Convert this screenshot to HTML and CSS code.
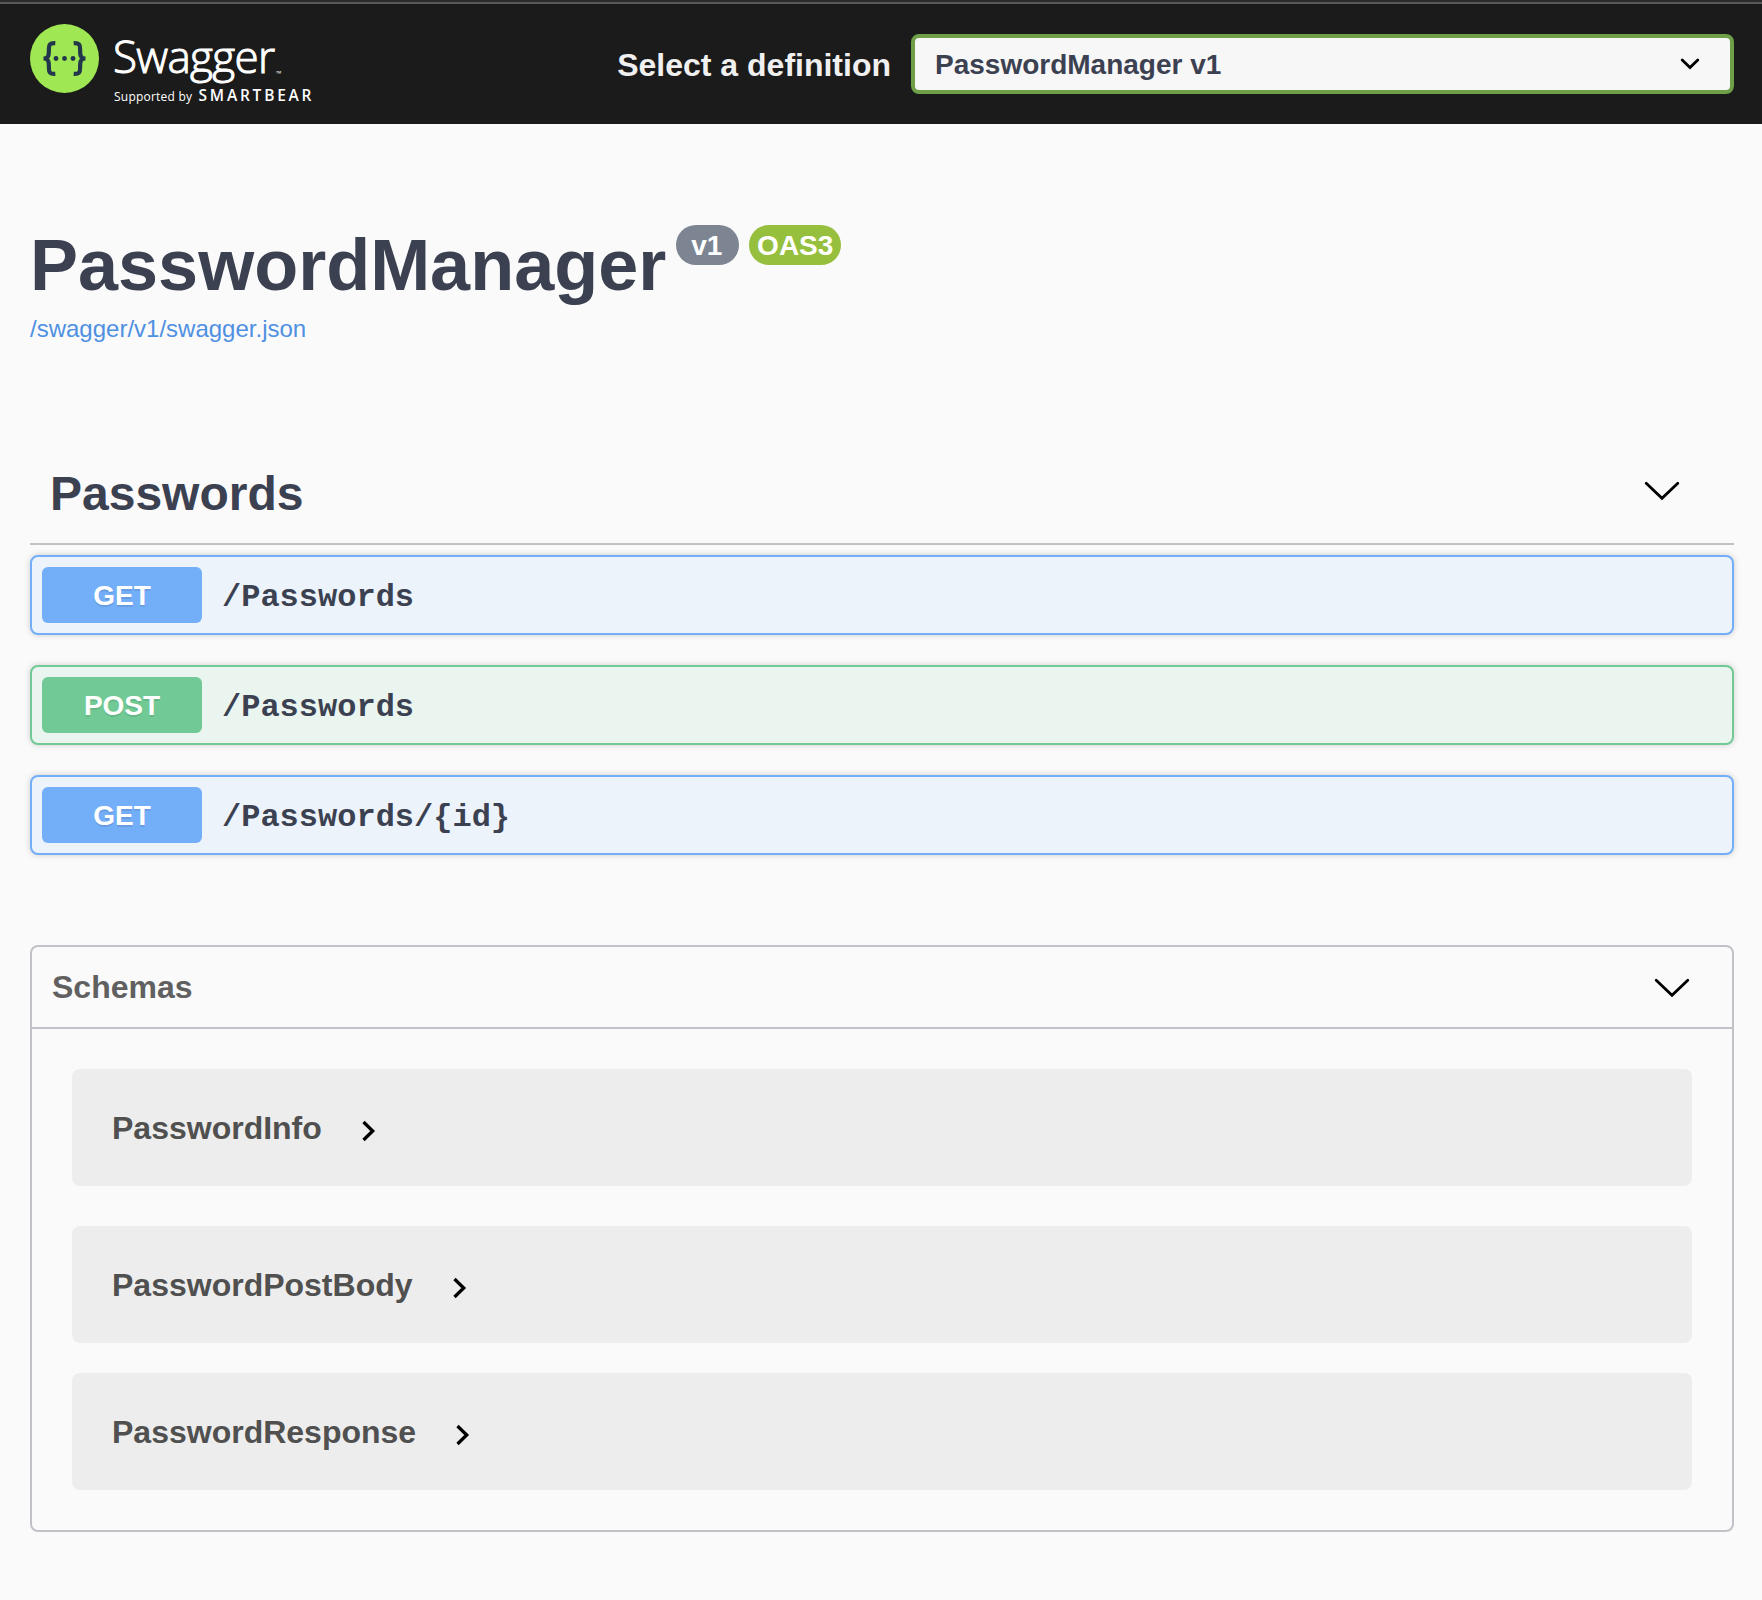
FILE: index.html
```html
<!DOCTYPE html>
<html lang="en">
<head>
<meta charset="utf-8">
<title>Swagger UI</title>
<link rel="stylesheet" href="styles.css">
</head>
<body>
<header class="topbar">
  <svg class="logo" width="300" height="100" viewBox="0 0 300 100" role="img" aria-label="Swagger">
    <circle cx="34.5" cy="34.5" r="34.5" fill="#9fe753"/>
    <g fill="none" stroke="#22374b" stroke-width="4.2">
      <path d="M25.3 19.2c-5.4-.3-6.400 1.500-6.400 5.600 0 5.800.2 9.700-5.400 9.700 5.600 0 5.400 3.900 5.400 9.700 0 4.100 1 5.900 6.400 5.600"/>
      <path d="M43.700 19.200c5.400-.3 6.400 1.500 6.400 5.600 0 5.800-.2 9.700 5.400 9.700-5.600 0-5.400 3.900-5.400 9.700 0 4.100-1 5.900-6.400 5.600"/>
    </g>
    <g fill="#22374b">
      <circle cx="26" cy="34.500" r="2.400"/><circle cx="34.500" cy="34.500" r="2.400"/><circle cx="43" cy="34.500" r="2.400"/>
    </g>
    <g fill="#fff">
      <text class="logo-name" x="83" y="48.500" textLength="162" lengthAdjust="spacing">Swagger</text>
      <text class="logo-tm" x="246" y="52">™</text>
      <text class="logo-by" x="84" y="77" textLength="78">Supported by</text>
      <text class="logo-brand" x="168.500" y="76.500" textLength="113">SMARTBEAR</text>
    </g>
  </svg>
  <label class="picker">
    <span class="picker-label">Select a definition</span>
    <span class="select"><span class="select-value">PasswordManager v1</span>
      <svg width="20" height="14" viewBox="0 0 20 14"><path d="M2.200 3 10 10.500 17.800 3" fill="none" stroke="#000" stroke-width="2.800" stroke-linecap="round"/></svg>
    </span>
  </label>
</header>
<main class="page">
  <section class="info">
    <div class="title-row">
      <h1 class="title">PasswordManager</h1>
      <span class="badge badge-version">v1</span>
      <span class="badge badge-oas">OAS3</span>
    </div>
    <a class="spec-link">/swagger/v1/swagger.json</a>
  </section>
  <section>
    <div class="tag">
      <h2 class="tag-name">Passwords</h2>
      <svg class="tag-arrow" width="36" height="20" viewBox="0 0 36 20"><path d="M2.200 2.200 18 17.300 33.800 2.200" fill="none" stroke="#000" stroke-width="2.800" stroke-linecap="round"/></svg>
    </div>
    <div class="operations">
      <div class="op op-get"><span class="method">GET</span><span class="path">/Passwords</span></div>
      <div class="op op-post"><span class="method">POST</span><span class="path">/Passwords</span></div>
      <div class="op op-get"><span class="method">GET</span><span class="path">/Passwords/{id}</span></div>
    </div>
  </section>
  <section class="schemas">
    <div class="schemas-head">
      <h3 class="schemas-title">Schemas</h3>
      <svg class="schemas-arrow" width="36" height="20" viewBox="0 0 36 20"><path d="M2.200 2.200 18 17.300 33.800 2.200" fill="none" stroke="#000" stroke-width="2.800" stroke-linecap="round"/></svg>
    </div>
    <div class="models">
      <div class="model model-first"><span class="model-name">PasswordInfo</span><svg class="model-arrow" width="14" height="22" viewBox="0 0 14 22"><path d="M1.500 2 10.700 11l-9.200 9" fill="none" stroke="#000" stroke-width="3.300"/></svg></div>
      <div class="model"><span class="model-name">PasswordPostBody</span><svg class="model-arrow" width="14" height="22" viewBox="0 0 14 22"><path d="M1.500 2 10.700 11l-9.200 9" fill="none" stroke="#000" stroke-width="3.300"/></svg></div>
      <div class="model"><span class="model-name">PasswordResponse</span><svg class="model-arrow" width="14" height="22" viewBox="0 0 14 22"><path d="M1.500 2 10.700 11l-9.200 9" fill="none" stroke="#000" stroke-width="3.300"/></svg></div>
    </div>
  </section>
</main>
</body>
</html>
```
FILE: styles.css
```css
* { box-sizing: border-box; }

body {
  margin: 0;
  min-height: 1600px;
  background: #fafafa;
  color: #3b4151;
  font-family: "Liberation Sans", Arial, sans-serif;
}

h1, h2, h3 { margin: 0; }
svg { display: block; flex: none; }

.topbar {
  display: flex;
  justify-content: space-between;
  align-items: flex-start;
  height: 124px;
  padding: 20px 28px 0 30px;
  border-top: 2px solid #2b2b2b;
  background: linear-gradient(#595959 2px, #1b1b1b 2px);
}

.logo { margin-top: 2px; overflow: visible; }
.logo-name { font: 300 44px "Open Sans", sans-serif; stroke: #fff; stroke-width: 1px; }
.logo-tm { font: 400 7px "Open Sans", sans-serif; }
.logo-by { font: 400 12px "Open Sans", sans-serif; }
.logo-brand { font: 600 15.5px "Open Sans", sans-serif; }

.picker {
  display: flex;
  align-items: center;
  gap: 20px;
  margin-top: 12px;
  font-weight: 700;
}
.picker-label { padding-top: 2px; color: #f0f0f0; font-size: 32px; }
.select {
  display: flex;
  align-items: center;
  justify-content: space-between;
  width: 823px;
  height: 60px;
  padding: 0 30px 0 20px;
  border: 4px solid #6fa049;
  border-radius: 8px;
  background: #f7f7f7;
  font-size: 28px;
}
.select-value { padding-top: 2px; }

.page { padding: 105px 28px 0 30px; }

.info { height: 215px; }
.title-row { display: flex; align-items: flex-start; height: 72px; }
.title { font-size: 72px; line-height: 72px; }
.badge {
  height: 40px;
  margin: -4px 0 0 10px;
  border-radius: 20px;
  color: #fff;
  font-size: 28px;
  font-weight: 700;
  line-height: 41px;
  text-align: center;
}
.badge-version { width: 63px; padding-right: 2px; background: #7d8492; }
.badge-oas { width: 92px; background: #96bf3d; }
.spec-link {
  display: block;
  margin-top: 14px;
  color: #4f90e2;
  font-size: 24px;
  line-height: 28px;
}

.tag {
  display: flex;
  align-items: center;
  justify-content: space-between;
  height: 101px;
  padding: 0 54px 0 20px;
  border-bottom: 2px solid #c1c1c7;
}
.tag-name { font-size: 48px; line-height: 60px; }
.tag-arrow { margin-bottom: 5px; }

.operations { display: flex; flex-direction: column; gap: 30px; margin-top: 10px; }
.op {
  display: flex;
  align-items: center;
  gap: 20px;
  height: 80px;
  padding: 0 10px;
  border: 2px solid;
  border-radius: 8px;
  box-shadow: 0 0 6px rgba(0, 0, 0, .19);
}
.op-get { border-color: #73aef9; background: #ecf3fb; }
.op-post { border-color: #71ca95; background: #ebf5f0; }
.method {
  width: 160px;
  height: 56px;
  border-radius: 6px;
  color: #fff;
  font-size: 28px;
  font-weight: 700;
  line-height: 57px;
  text-align: center;
  text-shadow: 0 2px 0 rgba(0, 0, 0, .1);
}
.op-get .method { background: #73aef9; }
.op-post .method { background: #71ca95; }
.path {
  padding-top: 4px;
  font-family: "Liberation Mono", "Courier New", monospace;
  font-size: 32px;
  font-weight: 700;
}

.schemas {
  height: 587px;
  margin-top: 90px;
  border: 2px solid #c1c1c7;
  border-radius: 8px;
}
.schemas-head {
  display: flex;
  align-items: center;
  justify-content: space-between;
  height: 82px;
  padding: 0 42px 0 20px;
  border-bottom: 2px solid #c1c1c7;
}
.schemas-title { padding-top: 1px; color: #606060; font-size: 32px; }
.schemas-arrow { margin-top: 2px; }

.models { display: flex; flex-direction: column; gap: 30px; padding: 40px; }
.model {
  display: flex;
  align-items: center;
  gap: 40px;
  height: 117px;
  padding: 0 40px;
  border-radius: 8px;
  background: #ededed;
  color: #505050;
  font-size: 32px;
  font-weight: 700;
}
.model-first { margin-bottom: 10px; }
.model-name { padding-top: 2px; }
.model-arrow { margin-top: 7px; }
```
